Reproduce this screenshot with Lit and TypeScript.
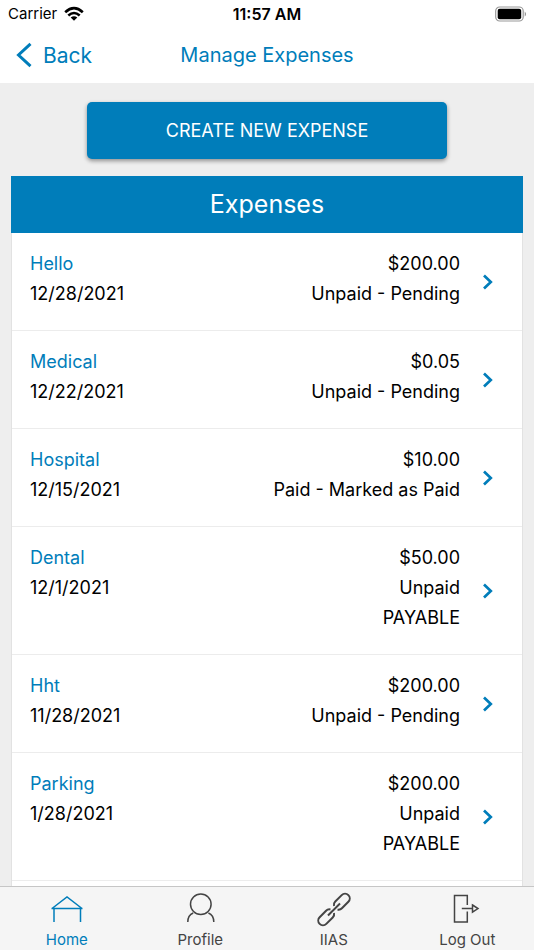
import { LitElement, html, css, svg } from "lit";
import { customElement, state } from "lit/decorators.js";
import { classMap } from "lit/directives/class-map.js";

interface Expense {
  name: string;
  date: string;
  amount: string;
  status: string[];
}

const expenses: Expense[] = [
  { name: "Hello", date: "12/28/2021", amount: "$200.00", status: ["Unpaid - Pending"] },
  { name: "Medical", date: "12/22/2021", amount: "$0.05", status: ["Unpaid - Pending"] },
  { name: "Hospital", date: "12/15/2021", amount: "$10.00", status: ["Paid - Marked as Paid"] },
  { name: "Dental", date: "12/1/2021", amount: "$50.00", status: ["Unpaid", "PAYABLE"] },
  { name: "Hht", date: "11/28/2021", amount: "$200.00", status: ["Unpaid - Pending"] },
  { name: "Parking", date: "1/28/2021", amount: "$200.00", status: ["Unpaid", "PAYABLE"] },
];

const tabs = [
  {
    label: "Home",
    icon: svg`<path d="M2 15.500 L17 4 L32 15.500 M1.500 15.500 H32.500 M4 15.500 V29 M30.500 15.500 V29"/>`,
  },
  {
    label: "Profile",
    icon: svg`<circle cx="17.800" cy="11.200" r="10.300"/><path d="M10.200 20 C6.500 21.500 4.800 24.500 4.800 29 M25.400 20 C29.100 21.500 30.800 24.500 30.800 29"/>`,
  },
  {
    label: "IIAS",
    icon: svg`<g transform="translate(17 16.500) rotate(-45)" stroke-width="2"><path d="M2.500 -2.500 A4.600 4.600 0 0 1 6.500 -4.700 H15.600 A4.700 4.700 0 0 1 15.600 4.700 H6.500 A4.600 4.600 0 0 1 2.500 2.500"/><path d="M-2.500 -2.500 A4.600 4.600 0 0 0 -6.500 -4.700 H-15.600 A4.700 4.700 0 0 0 -15.600 4.700 H-6.500 A4.600 4.600 0 0 0 -2.500 2.500"/><path d="M-8.500 0 H8.500"/></g>`,
  },
  {
    label: "Log Out",
    icon: svg`<path d="M17.300 12 V2.500 H4.500 V29 H17.300 V18.500 M11.800 15.500 H22.500 M22.500 12 L28 15.500 L22.500 19.200 Z"/>`,
  },
];

@customElement("app-root")
export class AppRoot extends LitElement {
  @state() private active = "Home";

  static styles = css`
    :host {
      --blue: #007dba;
      display: flex;
      flex-direction: column;
      height: 100vh;
      background: #eee;
      color: #000;
      font-family: Inter, "Liberation Sans", sans-serif;
      font-size: 18px;
    }
    button {
      margin: 0;
      padding: 0;
      border: 0;
      background: none;
      color: inherit;
      font: inherit;
      cursor: pointer;
    }
    svg {
      display: block;
      flex: none;
    }
    .top {
      flex: none;
      background: #fff;
    }
    .status,
    .nav {
      display: grid;
      grid-template-columns: 1fr auto 1fr;
      align-items: center;
    }
    .status {
      height: 27px;
      padding: 0 8px;
      font-size: 15px;
    }
    .carrier {
      display: flex;
      align-items: center;
      gap: 7px;
    }
    .time {
      font-size: 16px;
      font-weight: 600;
    }
    .battery {
      justify-self: end;
    }
    .nav {
      height: 56px;
      padding: 0 16px;
      color: var(--blue);
    }
    .back {
      display: flex;
      align-items: center;
      justify-self: start;
      gap: 11px;
      font-size: 21px;
    }
    h1,
    h2,
    ul,
    p {
      margin: 0;
      padding: 0;
      font-weight: 400;
    }
    h1 {
      font-size: 20px;
    }
    main {
      display: flex;
      flex: 1;
      flex-direction: column;
      min-height: 0;
      padding: 19px 11px 0;
      overflow: hidden;
    }
    .create {
      flex: none;
      align-self: center;
      width: 360px;
      max-width: 100%;
      height: 57px;
      margin-bottom: 17px;
      border-radius: 5px;
      background: var(--blue);
      box-shadow: 0 2px 4px rgba(0, 0, 0, 0.4);
      color: #fff;
    }
    h2 {
      flex: none;
      background: var(--blue);
      color: #fff;
      font-size: 25px;
      line-height: 57px;
      text-align: center;
    }
    ul {
      flex: 1 0 auto;
      border: solid #e2e2e2;
      border-width: 0 1px;
      background: #fff;
      list-style: none;
    }
    .row {
      display: flex;
      align-items: center;
      width: 100%;
      padding: 0 28px 0 18px;
      border-bottom: 1px solid #ececec;
      line-height: 30px;
      text-align: left;
    }
    .left,
    .right {
      padding: 16px 0 21px;
    }
    .left {
      flex: 1;
      align-self: flex-start;
    }
    .name {
      color: var(--blue);
    }
    .right {
      text-align: right;
    }
    .line {
      display: block;
    }
    .chevron {
      margin-left: 22px;
    }
    footer {
      display: grid;
      flex: none;
      grid-template-columns: repeat(4, 1fr);
      height: 63px;
      border-top: 1px solid #c6c6c6;
      background: #f5f5f5;
    }
    .tab {
      display: flex;
      flex-direction: column;
      align-items: center;
      padding-top: 6px;
      gap: 5px;
      color: #444;
      font-size: 15px;
      line-height: 20px;
    }
    .tab.active {
      color: var(--blue);
    }
    .tab svg {
      overflow: visible;
    }
  `;

  render() {
    return html`
      <header class="top">
        <div class="status">
          <span class="carrier">
            Carrier
            <svg width="20" height="16" viewBox="0 0 20 16" fill="none" stroke="#000" stroke-width="2.600" aria-hidden="true">
              <path d="M1.200 6.200 Q10 -1.800 18.800 6.200 M4.300 9.500 Q10 4.500 15.700 9.500" />
              <path d="M10 14.800 L6.700 11.600 Q10 9 13.300 11.600 Z" fill="#000" stroke="none" />
            </svg>
          </span>
          <span class="time">11:57 AM</span>
          <svg class="battery" width="32" height="16" viewBox="0 0 32 16" aria-hidden="true">
            <rect x="1.700" y="1" width="27.500" height="14" rx="4" fill="none" stroke="#999" stroke-width="1.200" />
            <rect x="3.700" y="2.800" width="23.500" height="10.400" rx="2" />
            <path d="M30.700 5.500 Q33.500 8 30.700 10.500 Z" fill="#999" />
          </svg>
        </div>
        <nav class="nav">
          <button class="back">
            <svg width="16" height="26" viewBox="0 0 16 26" fill="none" stroke="currentColor" stroke-width="3" aria-hidden="true">
              <path d="M14.500 1.800 L2.500 13 L14.500 24.200" />
            </svg>
            Back
          </button>
          <h1>Manage Expenses</h1>
        </nav>
      </header>
      <main>
        <button class="create">CREATE NEW EXPENSE</button>
        <h2>Expenses</h2>
        <ul>
          ${expenses.map(
            (e) => html`<li>
              <button class="row">
                <span class="left">
                  <span class="line name">${e.name}</span>
                  <span class="line">${e.date}</span>
                </span>
                <span class="right">
                  <span class="line">${e.amount}</span>
                  ${e.status.map((s) => html`<span class="line">${s}</span>`)}
                </span>
                <svg class="chevron" width="12" height="16" viewBox="0 0 12 16" fill="none" stroke="#007dba" stroke-width="2.700" aria-hidden="true">
                  <path d="M2 1.500 L8.800 8 L2 14.500" />
                </svg>
              </button>
            </li>`
          )}
        </ul>
      </main>
      <footer>
        ${tabs.map(
          (t) => html`<button
            class=${classMap({ tab: true, active: t.label === this.active })}
            @click=${() => (this.active = t.label)}
          >
            <svg width="34" height="32" viewBox="0 0 34 32" fill="none" stroke="currentColor" stroke-width="1.500" aria-hidden="true">${t.icon}</svg>
            ${t.label}
          </button>`
        )}
      </footer>
    `;
  }
}
